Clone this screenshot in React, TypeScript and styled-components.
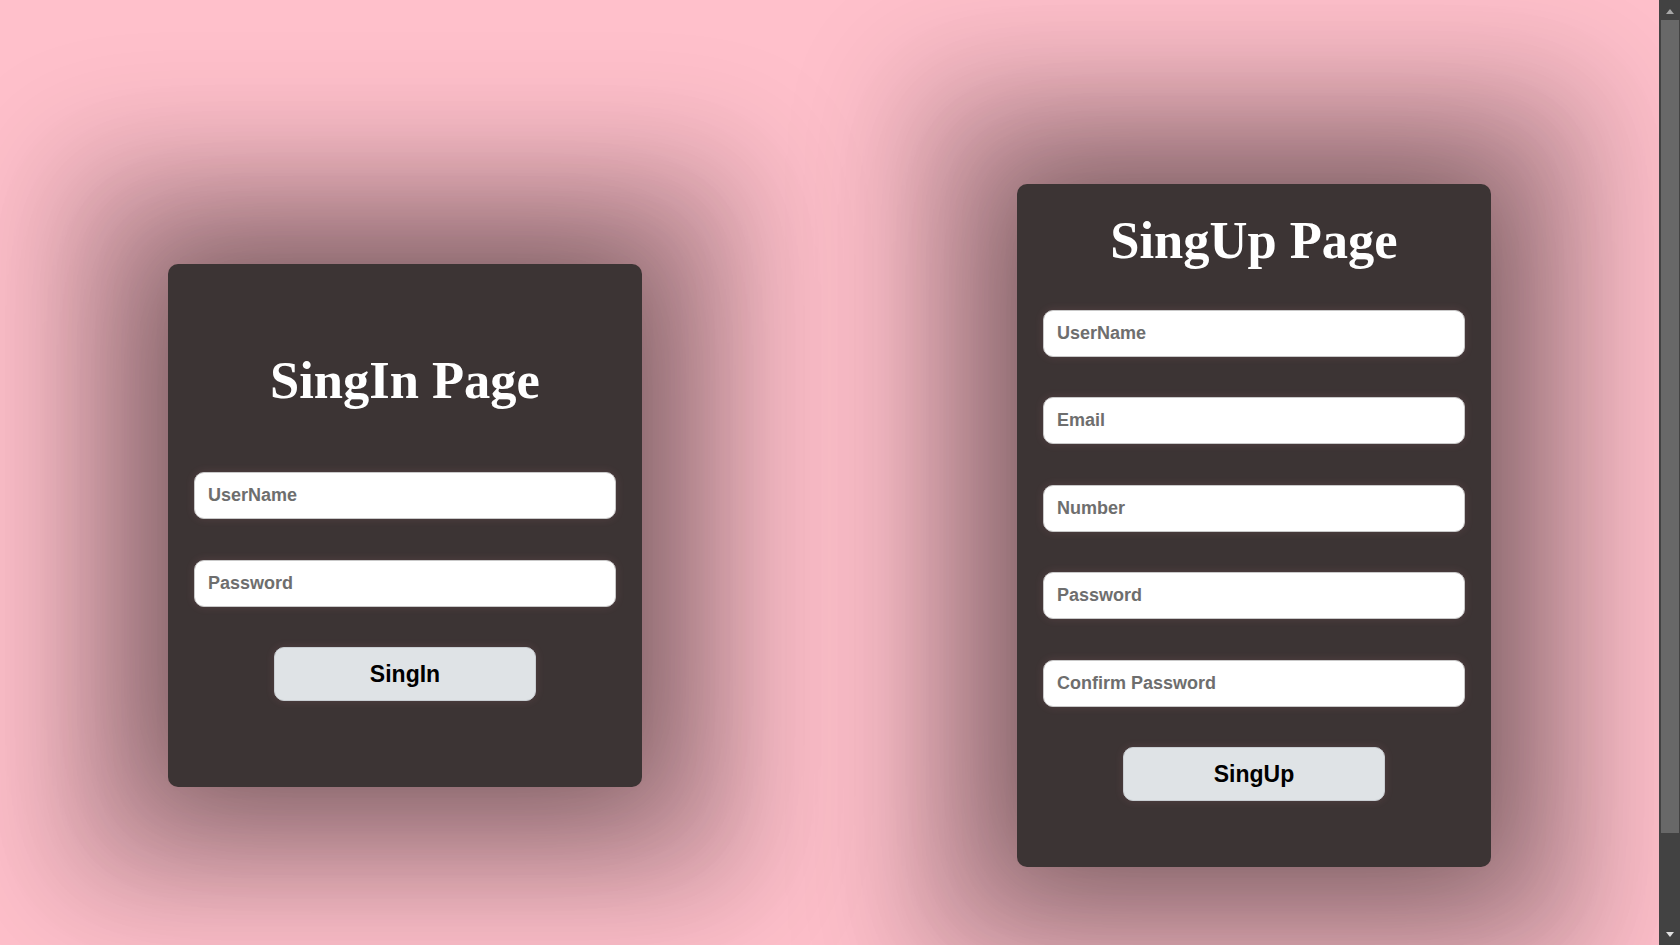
import styled, { createGlobalStyle } from "styled-components";

const GlobalStyle = createGlobalStyle`
  :root {
    color-scheme: dark;
  }
  html, body {
    margin: 0;
    padding: 0;
  }
  body {
    background-color: pink;
    font-family: "Liberation Sans", Arial, sans-serif;
  }
`;

type Field = { name: string; type: string; placeholder: string };

const signInFields: Field[] = [
  { name: "username", type: "text", placeholder: "UserName" },
  { name: "password", type: "password", placeholder: "Password" },
];

const signUpFields: Field[] = [
  { name: "username", type: "text", placeholder: "UserName" },
  { name: "email", type: "email", placeholder: "Email" },
  { name: "number", type: "text", placeholder: "Number" },
  { name: "password", type: "password", placeholder: "Password" },
  { name: "confirm", type: "password", placeholder: "Confirm Password" },
];

function App() {
  return (
    <>
      <GlobalStyle />
      <Page>
        <Card $padTop={86} $padBottom={86}>
          <Title $gap={62}>SingIn Page</Title>
          <Form onSubmit={(e) => e.preventDefault()}>
            {signInFields.map((f) => (
              <Input key={f.name} name={f.name} type={f.type} placeholder={f.placeholder} />
            ))}
            <Button type="submit">SingIn</Button>
          </Form>
        </Card>
        <Card $padTop={26} $padBottom={66}>
          <Title $gap={40}>SingUp Page</Title>
          <Form onSubmit={(e) => e.preventDefault()}>
            {signUpFields.map((f) => (
              <Input key={f.name} name={f.name} type={f.type} placeholder={f.placeholder} />
            ))}
            <Button type="submit">SingUp</Button>
          </Form>
        </Card>
      </Page>
      <ScrollTrack aria-hidden>
        <ArrowUp />
        <Thumb />
        <ArrowDown />
      </ScrollTrack>
    </>
  );
}

export default App;

const Page = styled.div`
  display: flex;
  align-items: center;
  gap: 375px;
  height: 1051px;
  padding: 0 0 5px 168px;
`;

const Card = styled.div<{ $padTop: number; $padBottom: number }>`
  box-sizing: border-box;
  flex: none;
  width: 474px;
  padding: ${(p) => p.$padTop}px 26px ${(p) => p.$padBottom}px;
  background-color: #3c3434;
  border-radius: 10px;
  box-shadow:
    0 0 120px 0 rgba(0, 0, 0, 0.3),
    0 0 120px 60px rgba(0, 0, 0, 0.22),
    0 0 120px 120px rgba(0, 0, 0, 0.15);
  display: flex;
  flex-direction: column;
  align-items: center;
`;

const Title = styled.h1<{ $gap: number }>`
  margin: 0 0 ${(p) => p.$gap}px;
  font-family: "Liberation Serif", "Times New Roman", serif;
  font-size: 52.5px;
  font-weight: 700;
  line-height: 60px;
  color: #fff;
`;

const Form = styled.form`
  width: 100%;
  display: flex;
  flex-direction: column;
  align-items: center;
  gap: 40.5px;
`;

const Input = styled.input`
  box-sizing: border-box;
  width: 100%;
  height: 47px;
  padding: 0 13px;
  border: 1px solid #c9c9c9;
  border-radius: 10px;
  background: #fff;
  color: #222;
  font-family: "Liberation Sans", Arial, sans-serif;
  font-size: 18px;
  font-weight: bold;
  outline: none;
  box-shadow: 0 0 10px rgba(255, 160, 170, 0.12);
  color-scheme: light;

  &::placeholder {
    color: #6e6e6e;
    opacity: 1;
  }
`;

const Button = styled.button`
  box-sizing: border-box;
  width: 262px;
  height: 54px;
  border: 1px solid #c9ced2;
  border-radius: 10px;
  background-color: #dfe3e6;
  color: #000;
  font-family: "Liberation Sans", Arial, sans-serif;
  font-size: 23px;
  font-weight: bold;
  cursor: pointer;
  box-shadow: 0 0 10px rgba(255, 160, 170, 0.12);
`;

const ScrollTrack = styled.div`
  position: fixed;
  top: 0;
  right: 0;
  width: 21px;
  height: 100vh;
  background: #424242;
  display: flex;
  flex-direction: column;
  align-items: center;
`;

const ArrowUp = styled.div`
  flex: none;
  margin: 9px 0 6px;
  width: 0;
  height: 0;
  border-left: 4px solid transparent;
  border-right: 4px solid transparent;
  border-bottom: 5px solid #a8a8a8;
`;

const Thumb = styled.div`
  flex: none;
  align-self: stretch;
  height: 813px;
  margin: 0 1px 0 2px;
  background: #686868;
`;

const ArrowDown = styled.div`
  flex: none;
  margin-top: auto;
  margin-bottom: 8px;
  width: 0;
  height: 0;
  border-left: 4px solid transparent;
  border-right: 4px solid transparent;
  border-top: 5px solid #e0e0e0;
`;
